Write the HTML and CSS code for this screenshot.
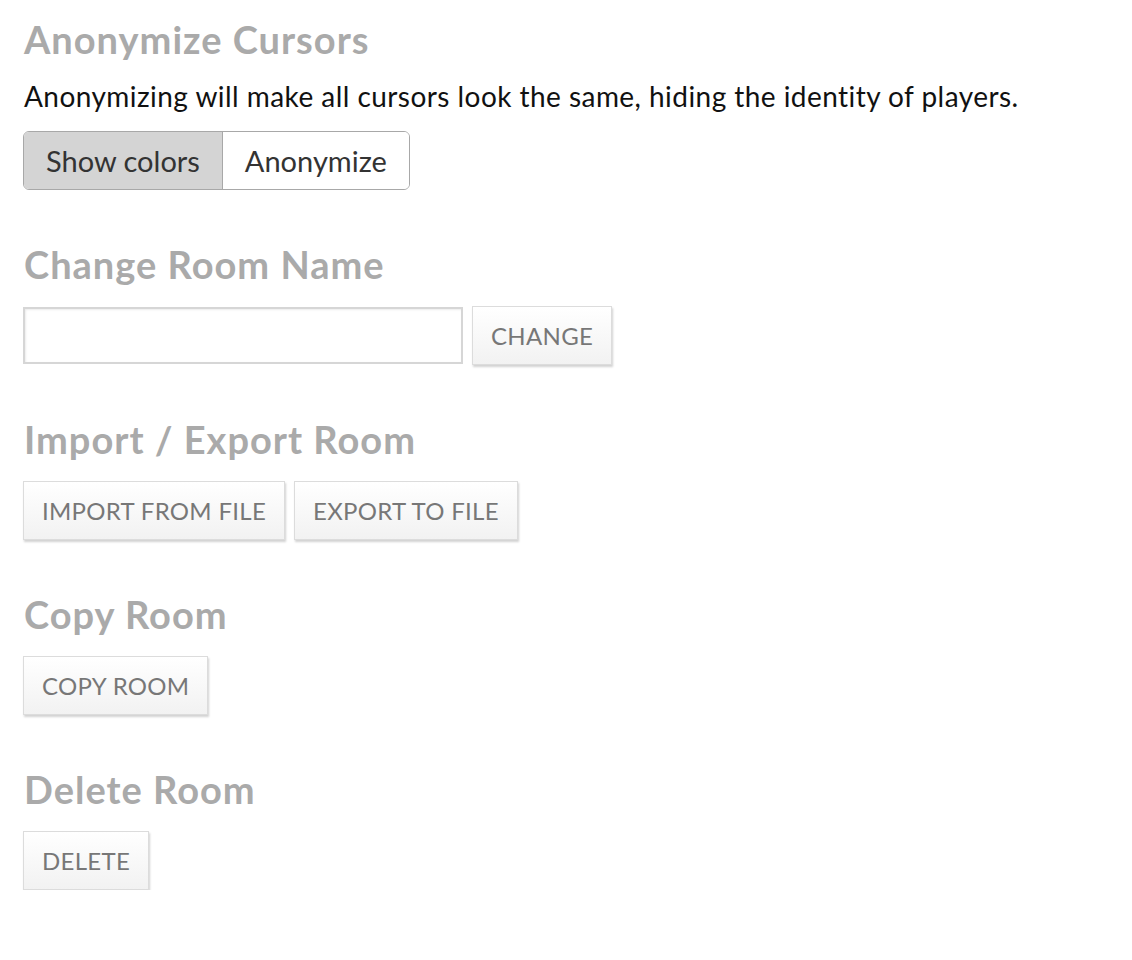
FILE: index.html
```html
<!DOCTYPE html>
<html>
<head>
<meta charset="utf-8">
<link rel="stylesheet" href="styles.css">
</head>
<body>
<div class="page">
  <section class="section">
    <h2 class="title">Anonymize Cursors</h2>
    <p class="desc">Anonymizing will make all cursors look the same, hiding the identity of players.</p>
    <div class="segmented">
      <button class="seg seg-active">Show colors</button>
      <button class="seg">Anonymize</button>
    </div>
  </section>
  <section class="section">
    <h2 class="title">Change Room Name</h2>
    <div class="row">
      <input class="text-input" type="text">
      <button class="btn">CHANGE</button>
    </div>
  </section>
  <section class="section">
    <h2 class="title">Import / Export Room</h2>
    <div class="row">
      <button class="btn">IMPORT FROM FILE</button>
      <button class="btn">EXPORT TO FILE</button>
    </div>
  </section>
  <section class="section">
    <h2 class="title">Copy Room</h2>
    <div class="row">
      <button class="btn">COPY ROOM</button>
    </div>
  </section>
  <section class="section">
    <h2 class="title">Delete Room</h2>
    <div class="row">
      <button class="btn">DELETE</button>
    </div>
  </section>
</div>
</body>
</html>
```

FILE: styles.css
```css
html, body {
  margin: 0;
  padding: 0;
  background: #ffffff;
}
body {
  font-family: Lato, "Open Sans", sans-serif;
  color: #111;
}
.page {
  padding: 16px 23px 0 23px;
  display: flex;
  flex-direction: column;
  gap: 51px;
}
.section {
  display: flex;
  flex-direction: column;
  align-items: flex-start;
}
.title {
  margin: 0 0 19px 1px;
  font-size: 38px;
  line-height: 46px;
  font-weight: 700;
  letter-spacing: 1px;
  color: #aaaaaa;
}
.desc {
  margin: -2px 0 18px 1px;
  font-size: 28px;
  line-height: 34px;
  letter-spacing: 0.45px;
  color: #111;
}
.segmented {
  display: flex;
  border: 1px solid #a8a8a8;
  border-radius: 6px;
  overflow: hidden;
  height: 59px;
  box-sizing: border-box;
}
.seg {
  font-family: Lato, sans-serif;
  font-size: 29px;
  color: #333;
  background: #ffffff;
  border: none;
  padding: 0 22px;
  margin: 0;
  height: 100%;
}
.seg + .seg {
  border-left: 1px solid #a8a8a8;
}
.seg-active {
  background: #d4d4d4;
}
.row {
  display: flex;
  gap: 9px;
  align-items: center;
}
.text-input {
  width: 440px;
  height: 57px;
  box-sizing: border-box;
  border: 2px solid #d6d6d6;
  box-shadow: inset 1px 1px 2px rgba(0,0,0,0.08);
  margin: 0;
  background: #fff;
}
.btn {
  font-family: Lato, sans-serif;
  font-size: 24px;
  letter-spacing: 0.3px;
  color: #777;
  height: 59px;
  padding: 0 18px;
  margin: 0;
  border: 1px solid #dcdcdc;
  background: linear-gradient(#ffffff, #f2f2f2);
  box-shadow: 1px 2px 2px rgba(0,0,0,0.18);
}
```
